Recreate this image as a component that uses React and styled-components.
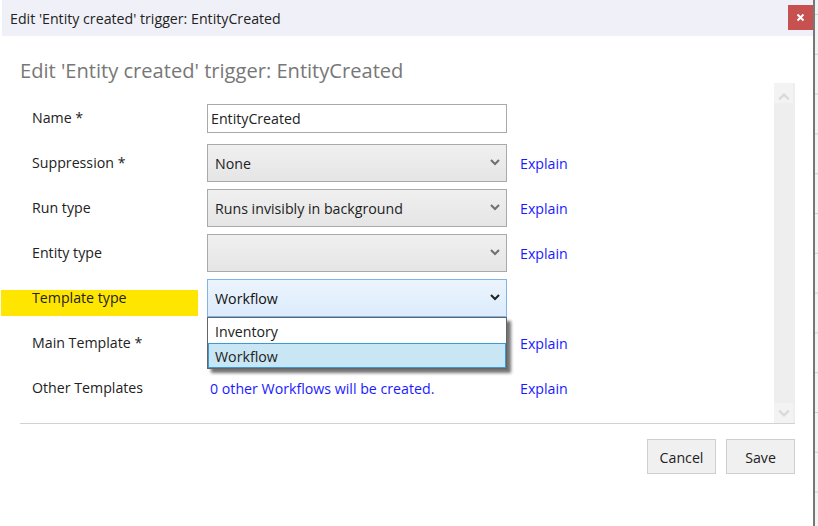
import React from 'react'
import styled, { createGlobalStyle } from 'styled-components'

const GlobalStyle = createGlobalStyle`
  html, body {
    margin: 0;
    padding: 0;
    background: #fff;
  }
  body {
    font-family: "Open Sans", "Noto Sans", sans-serif;
    color: #222;
  }
`

const Page = styled.div`
  width: 818px;
  height: 526px;
  display: flex;
  overflow: hidden;
  isolation: isolate;
  background: #fff;
`

const Backdrop = styled.div`
  width: 3px;
  border-left: 2px solid #777;
  background: linear-gradient(#cfcfcf 1px, transparent 1px) 0 14px / 100% 39.8px, #f3f3f3;
`

const Dialog = styled.div`
  width: 813px;
  padding-left: 2px;
  box-sizing: border-box;
  display: flex;
  flex-direction: column;
`

const TitleBar = styled.div`
  height: 36px;
  background: #f0f1f8;
  display: flex;
  align-items: center;
  justify-content: space-between;
  padding-left: 8px;
  font-size: 14.2px;
  color: #222;
`

const CloseButton = styled.button`
  width: 25px;
  height: 25px;
  margin-top: -2px;
  padding: 0;
  border: 0;
  background: #c75050;
  display: flex;
  align-items: center;
  justify-content: center;
`

const Body = styled.div`
  padding: 0 18px;
  display: flex;
  flex-direction: column;
`

const Heading = styled.h1`
  margin: 0;
  height: 47px;
  line-height: 70px;
  font-size: 20.1px;
  font-weight: 400;
  color: #777;
  white-space: nowrap;
`

const FormArea = styled.div`
  height: 340px;
  border-bottom: 1px solid #d2d2d2;
  display: flex;
  justify-content: space-between;
`

const Form = styled.div`
  padding: 13px 0 0 12px;
  display: flex;
  flex-direction: column;
`

const Row = styled.div`
  position: relative;
  height: 45px;
  display: grid;
  grid-template-columns: 175px 300px auto;
  align-items: center;
  font-size: 14.2px;
`

const Label = styled.label`
  position: relative;
  top: -1px;
  ${p => p.$marked && `
    &::before {
      content: '';
      position: absolute;
      z-index: -1;
      left: -31px;
      top: 2px;
      width: 197px;
      height: 26px;
      background: #ffe600;
    }
  `}
`

const TextInput = styled.input`
  box-sizing: border-box;
  width: 300px;
  height: 29px;
  padding: 0 3px;
  border: 1px solid #a9a9a9;
  background: #fff;
  font: inherit;
  color: #222;
  outline: none;
`

const SelectBox = styled.div`
  box-sizing: border-box;
  width: 300px;
  height: 38px;
  margin-top: -1px;
  padding: 0 6px 0 7px;
  border: 1px solid ${p => (p.$open ? '#7eb4ea' : '#a9a9a9')};
  background: ${p => p.$open
    ? 'linear-gradient(#ebf4fc, #dcecfc)'
    : 'linear-gradient(#f0f0f0, #e5e5e5)'};
  display: flex;
  align-items: center;
  justify-content: space-between;
  color: ${p => (p.$open ? '#111' : '#222')};
  svg {
    margin-top: -3px;
    color: ${p => (p.$open ? '#222' : '#707070')};
  }
`

const ExplainLink = styled.a`
  margin-left: 13px;
  color: #1a1aff;
`

const CreatedNote = styled.span`
  padding-left: 3px;
  color: #1a1aff;
  white-space: nowrap;
`

const Dropdown = styled.ul`
  position: absolute;
  z-index: 2;
  left: 175px;
  top: 41px;
  box-sizing: border-box;
  width: 300px;
  height: 52px;
  margin: 0;
  padding: 0;
  list-style: none;
  background: #fff;
  border: 1px solid #646464;
  box-shadow: 4px 4px 3px rgba(0, 0, 0, 0.55);
`

const Option = styled.li`
  box-sizing: border-box;
  height: 25px;
  padding-left: 7px;
  line-height: 27px;
  ${p => p.$selected && `
    background: #c9e6f5;
    border: 1px solid #3d9ad6;
    padding-left: 6px;
    line-height: 25px;
  `}
`

const Scrollbar = styled.div`
  width: 21px;
  background: #eeeeee;
  display: flex;
  flex-direction: column;
  justify-content: space-between;
`

const ScrollArrow = styled.div`
  width: 19px;
  height: 20px;
  background: #f3f3f3;
  display: flex;
  align-items: ${p => (p.$top ? 'flex-end' : 'center')};
  justify-content: center;
  color: #dadada;
`

const Footer = styled.div`
  padding-top: 15px;
  display: flex;
  justify-content: flex-end;
  gap: 10px;
`

const ActionButton = styled.button`
  width: 69px;
  height: 35px;
  padding: 1px 0 0;
  border: 1px solid #cfcfcf;
  background: #f0f0f0;
  font: inherit;
  font-size: 14.2px;
  color: #222;
`

const Chevron = ({ up, size = 10, width = 2 }) => (
  <svg width={size} height={size} viewBox="0 0 10 10" fill="none" stroke="currentColor" strokeWidth={width}>
    <path d={up ? 'M1 7L5 3L9 7' : 'M1 3L5 7L9 3'} />
  </svg>
)

const Select = ({ value, open }) => (
  <SelectBox $open={open}>
    <span>{value}</span>
    <Chevron />
  </SelectBox>
)

const Explain = () => <ExplainLink>Explain</ExplainLink>

export default function App() {
  return (
    <Page>
      <GlobalStyle />
      <Dialog>
        <TitleBar>
          <span>Edit 'Entity created' trigger: EntityCreated</span>
          <CloseButton aria-label="Close">
            <svg width="9" height="9" viewBox="0 0 9 9" stroke="#fff" strokeWidth="2">
              <path d="M1.5 1.5L7.5 7.5M7.5 1.5L1.5 7.5" />
            </svg>
          </CloseButton>
        </TitleBar>
        <Body>
          <Heading>Edit 'Entity created' trigger: EntityCreated</Heading>
          <FormArea>
            <Form>
              <Row>
                <Label>Name *</Label>
                <TextInput readOnly value="EntityCreated" />
              </Row>
              <Row>
                <Label>Suppression *</Label>
                <Select value="None" />
                <Explain />
              </Row>
              <Row>
                <Label>Run type</Label>
                <Select value="Runs invisibly in background" />
                <Explain />
              </Row>
              <Row>
                <Label>Entity type</Label>
                <Select value="" />
                <Explain />
              </Row>
              <Row>
                <Label $marked>Template type</Label>
                <Select value="Workflow" open />
                <Dropdown>
                  <Option>Inventory</Option>
                  <Option $selected>Workflow</Option>
                </Dropdown>
              </Row>
              <Row>
                <Label>Main Template *</Label>
                <Select value="" />
                <Explain />
              </Row>
              <Row>
                <Label>Other Templates</Label>
                <CreatedNote>0 other Workflows will be created.</CreatedNote>
                <Explain />
              </Row>
            </Form>
            <Scrollbar>
              <ScrollArrow $top><Chevron up size={12} /></ScrollArrow>
              <ScrollArrow><Chevron size={12} /></ScrollArrow>
            </Scrollbar>
          </FormArea>
          <Footer>
            <ActionButton>Cancel</ActionButton>
            <ActionButton>Save</ActionButton>
          </Footer>
        </Body>
      </Dialog>
      <Backdrop />
    </Page>
  )
}
